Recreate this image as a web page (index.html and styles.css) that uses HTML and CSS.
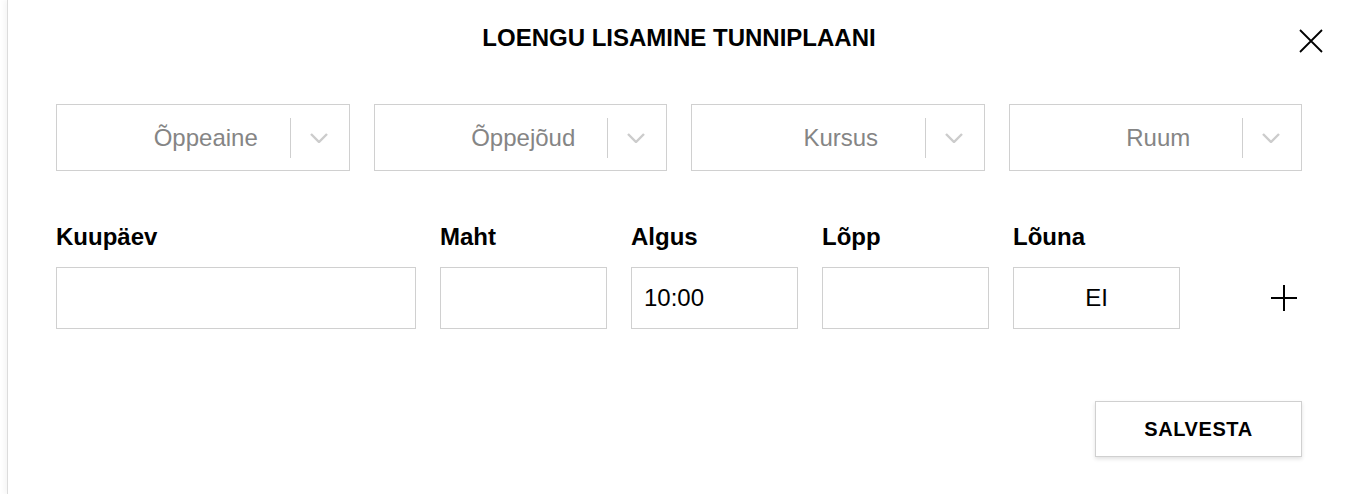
FILE: index.html
```html
<!DOCTYPE html>
<html lang="et">
<head>
<meta charset="utf-8">
<title>Loengu lisamine tunniplaani</title>
<link rel="stylesheet" href="styles.css">
</head>
<body>
<div class="modal">
  <button class="close" aria-label="Sulge">
    <svg width="24" height="24" viewBox="0 0 24 24"><path d="M1 1 L23 23 M23 1 L1 23" stroke="#000" stroke-width="1.8" fill="none"/></svg>
  </button>
  <h1 class="title">LOENGU LISAMINE TUNNIPLAANI</h1>

  <div class="selects">
    <div class="select"><span class="select-value">Õppeaine</span><span class="indicators"><span class="sep"></span><svg class="chev" width="18" height="10" viewBox="0 0 18 10"><path d="M1 1 L9 9 L17 1" stroke="#ccc" stroke-width="2.4" fill="none"/></svg></span></div>
    <div class="select"><span class="select-value">Õppejõud</span><span class="indicators"><span class="sep"></span><svg class="chev" width="18" height="10" viewBox="0 0 18 10"><path d="M1 1 L9 9 L17 1" stroke="#ccc" stroke-width="2.4" fill="none"/></svg></span></div>
    <div class="select"><span class="select-value">Kursus</span><span class="indicators"><span class="sep"></span><svg class="chev" width="18" height="10" viewBox="0 0 18 10"><path d="M1 1 L9 9 L17 1" stroke="#ccc" stroke-width="2.4" fill="none"/></svg></span></div>
    <div class="select"><span class="select-value">Ruum</span><span class="indicators"><span class="sep"></span><svg class="chev" width="18" height="10" viewBox="0 0 18 10"><path d="M1 1 L9 9 L17 1" stroke="#ccc" stroke-width="2.4" fill="none"/></svg></span></div>
  </div>

  <div class="fields">
    <div class="field f-date"><div class="label">Kuupäev</div><div class="input"></div></div>
    <div class="field"><div class="label">Maht</div><div class="input"></div></div>
    <div class="field"><div class="label">Algus</div><div class="input">10:00</div></div>
    <div class="field"><div class="label">Lõpp</div><div class="input"></div></div>
    <div class="field"><div class="label">Lõuna</div><div class="input center">EI</div></div>
    <div class="add">
      <svg width="28" height="28" viewBox="0 0 28 28"><path d="M14 1 V27 M1 14 H27" stroke="#000" stroke-width="2" fill="none"/></svg>
    </div>
  </div>

  <div class="actions">
    <button class="save">SALVESTA</button>
  </div>
</div>
</body>
</html>
```

FILE: styles.css
```css
html, body {
  margin: 0;
  padding: 0;
  background: #fff;
}
body {
  font-family: "Liberation Sans", Arial, sans-serif;
  color: #000;
}
.modal {
  position: relative;
  margin-left: 7px;
  min-height: 494px;
  box-sizing: border-box;
  border-left: 1px solid #dcdcdc;
  box-shadow: -3px 0 5px rgba(0, 0, 0, 0.04);
  padding: 24px 48px 0 48px;
  background: #fff;
}
.close {
  position: absolute;
  top: 29px;
  right: 27px;
  width: 24px;
  height: 24px;
  padding: 0;
  border: 0;
  background: none;
  display: block;
}
.close svg { display: block; }
.title {
  margin: 0;
  font-size: 24px;
  font-weight: 700;
  line-height: 28px;
  text-align: center;
}
.selects {
  margin-top: 52px;
  display: grid;
  grid-template-columns: repeat(4, 1fr);
  gap: 24px;
}
.select {
  position: relative;
  height: 67px;
  box-sizing: border-box;
  border: 1px solid #d0d0d0;
  display: flex;
  align-items: center;
}
.select-value {
  flex: 1;
  text-align: center;
  padding-left: 6px;
  font-size: 24px;
  color: #858585;
}
.indicators {
  position: absolute;
  right: 0;
  top: 0;
  bottom: 0;
  width: 59px;
  display: flex;
  align-items: center;
}
.sep {
  width: 1px;
  height: 40px;
  background: #cfcfcf;
}
.chev {
  margin-left: 19px;
  display: block;
}
.fields {
  margin-top: 52px;
  display: flex;
  gap: 24px;
  align-items: flex-end;
}
.field {
  width: 167px;
}
.field.f-date {
  width: 360px;
}
.label {
  font-size: 24px;
  font-weight: 700;
  line-height: 28px;
  margin-bottom: 16px;
}
.input {
  height: 62px;
  box-sizing: border-box;
  border: 1px solid #d0d0d0;
  padding: 0 12px;
  font-size: 24px;
  display: flex;
  align-items: center;
}
.input.center {
  justify-content: center;
}
.add {
  flex: 1;
  height: 62px;
  display: flex;
  align-items: center;
  justify-content: flex-end;
  padding-right: 4px;
}
.add svg { display: block; }
.actions {
  margin-top: 72px;
  display: flex;
  justify-content: flex-end;
}
.save {
  width: 207px;
  height: 56px;
  box-sizing: border-box;
  border: 1px solid #d0d0d0;
  background: #fff;
  box-shadow: 0 2px 4px rgba(0, 0, 0, 0.12);
  font-family: "Liberation Sans", Arial, sans-serif;
  font-size: 20px;
  font-weight: 700;
  letter-spacing: 0.6px;
  color: #000;
  padding: 0;
}
```
